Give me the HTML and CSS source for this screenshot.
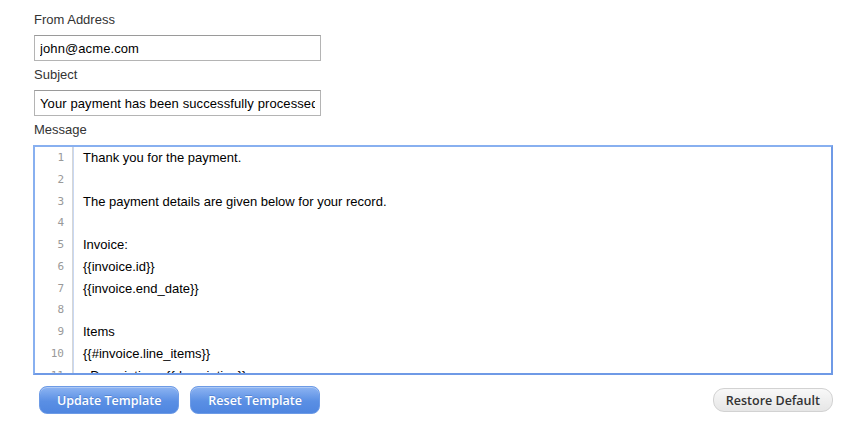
FILE: index.html
```html
<!DOCTYPE html>
<html>
  <head>
    <link rel="stylesheet" href="styles.css">
  </head>
  <body>
    <div class="form">
      <label class="label">From Address</label>
      <input class="field" type="text" value="john@acme.com">
      <label class="label">Subject</label>
      <input class="field" type="text" value="Your payment has been successfully processed">
      <label class="label">Message</label>
      <div class="editor">
        <div class="gutter">
          <div>1</div><div>2</div><div>3</div><div>4</div><div>5</div><div>6</div>
          <div>7</div><div>8</div><div>9</div><div>10</div><div>11</div><div>12</div>
        </div>
        <div class="code">
          <div class="line">Thank you for the payment.</div>
          <div class="line"></div>
          <div class="line">The payment details are given below for your record.</div>
          <div class="line"></div>
          <div class="line">Invoice:</div>
          <div class="line">{{invoice.id}}</div>
          <div class="line">{{invoice.end_date}}</div>
          <div class="line"></div>
          <div class="line">Items</div>
          <div class="line">{{#invoice.line_items}}</div>
          <div class="line">  Description : {{description}}</div>
          <div class="line">  Amount : {{amount}}</div>
        </div>
      </div>
      <div class="actions">
        <button class="btn btn-primary">Update Template</button>
        <button class="btn btn-primary">Reset Template</button>
        <button class="btn btn-plain">Restore Default</button>
      </div>
    </div>
  </body>
</html>
```

FILE: styles.css
```css
html, body {
  margin: 0;
  background: #fff;
}
.form {
  display: flex;
  flex-direction: column;
  align-items: flex-start;
  padding: 11px 0 0 34px;
  width: 800px;
  font-family: "Liberation Sans", Arial, sans-serif;
  font-size: 13px;
}
.label {
  display: block;
  height: 18px;
  line-height: 18px;
  margin-bottom: 6px;
  color: #333;
}
.field {
  box-sizing: border-box;
  width: 287px;
  height: 26px;
  margin: 0 0 5px 0;
  padding: 0 5px;
  border: 1px solid #b4b4b4;
  border-top-color: #9a9a9a;
  font-family: "Liberation Sans", Arial, sans-serif;
  font-size: 13px;
  letter-spacing: 0.1px;
  color: #000;
  background: #fff;
  outline: none;
}
.editor {
  box-sizing: border-box;
  display: flex;
  width: 800px;
  height: 230px;
  margin-left: -1px;
  border: 2px solid #7ba4ec;
  border-color: #88b0f0 #6f9ae6 #6f9ae6 #88b0f0;
  overflow: hidden;
  background: #fff;
}
.gutter {
  width: 29px;
  padding-right: 8px;
  border-right: 1px solid #d6d6d6;
  text-align: right;
  font-family: "DejaVu Sans Mono", monospace;
  font-size: 11px;
  line-height: 21.75px;
  color: #999;
}
.code {
  flex: 1;
  padding-left: 9px;
  border-left: 1px solid #c8d8f4;
  line-height: 21.75px;
  color: #000;
}
.line {
  height: 21.75px;
  white-space: pre;
}
.actions {
  display: flex;
  align-items: center;
  gap: 11px;
  width: 799px;
  margin-top: 11px;
  padding-left: 5px;
  box-sizing: border-box;
}
.btn {
  font-family: "Open Sans", "DejaVu Sans", sans-serif;
  font-weight: 600;
  font-size: 12.5px;
  cursor: pointer;
}
.btn-primary {
  height: 28px;
  padding: 0 17px;
  border: 1px solid #6d9be6;
  border-radius: 8px;
  color: #fff;
  text-shadow: 0 -1px 0 rgba(40, 90, 170, 0.35);
  background: linear-gradient(#8db4f2, #5a8fe4 55%, #4f86e0);
  box-shadow: inset 0 1px 0 rgba(255, 255, 255, 0.3);
}
.btn-plain {
  margin-left: auto;
  height: 24px;
  padding: 0 12px;
  border: 1px solid #d2d2d2;
  border-radius: 11px;
  color: #333;
  background: linear-gradient(#f8f8f8, #e6e6e6);
}
```
